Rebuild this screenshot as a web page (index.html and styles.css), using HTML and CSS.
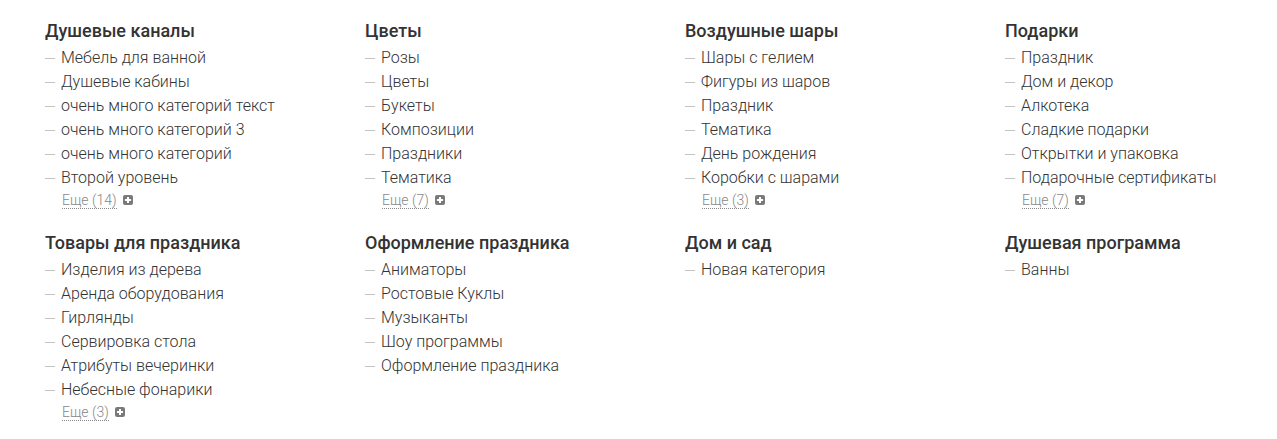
FILE: index.html
```html
<!DOCTYPE html>
<html lang="ru">
<head>
<meta charset="utf-8">
<link rel="stylesheet" href="styles.css">
</head>
<body>
<div class="catalog">
  <div class="section">
    <div class="title">Душевые каналы</div>
    <ul class="list">
      <li>Мебель для ванной</li>
      <li>Душевые кабины</li>
      <li>очень много категорий текст</li>
      <li>очень много категорий 3</li>
      <li>очень много категорий</li>
      <li>Второй уровень</li>
    </ul>
    <div class="more"><span class="more-link">Еще (14)</span><span class="plus"></span></div>
  </div>
  <div class="section">
    <div class="title">Цветы</div>
    <ul class="list">
      <li>Розы</li>
      <li>Цветы</li>
      <li>Букеты</li>
      <li>Композиции</li>
      <li>Праздники</li>
      <li>Тематика</li>
    </ul>
    <div class="more"><span class="more-link">Еще (7)</span><span class="plus"></span></div>
  </div>
  <div class="section">
    <div class="title">Воздушные шары</div>
    <ul class="list">
      <li>Шары с гелием</li>
      <li>Фигуры из шаров</li>
      <li>Праздник</li>
      <li>Тематика</li>
      <li>День рождения</li>
      <li>Коробки с шарами</li>
    </ul>
    <div class="more"><span class="more-link">Еще (3)</span><span class="plus"></span></div>
  </div>
  <div class="section">
    <div class="title">Подарки</div>
    <ul class="list">
      <li>Праздник</li>
      <li>Дом и декор</li>
      <li>Алкотека</li>
      <li>Сладкие подарки</li>
      <li>Открытки и упаковка</li>
      <li>Подарочные сертификаты</li>
    </ul>
    <div class="more"><span class="more-link">Еще (7)</span><span class="plus"></span></div>
  </div>
  <div class="section">
    <div class="title">Товары для праздника</div>
    <ul class="list">
      <li>Изделия из дерева</li>
      <li>Аренда оборудования</li>
      <li>Гирлянды</li>
      <li>Сервировка стола</li>
      <li>Атрибуты вечеринки</li>
      <li>Небесные фонарики</li>
    </ul>
    <div class="more"><span class="more-link">Еще (3)</span><span class="plus"></span></div>
  </div>
  <div class="section">
    <div class="title">Оформление праздника</div>
    <ul class="list">
      <li>Аниматоры</li>
      <li>Ростовые Куклы</li>
      <li>Музыканты</li>
      <li>Шоу программы</li>
      <li>Оформление праздника</li>
    </ul>
  </div>
  <div class="section">
    <div class="title">Дом и сад</div>
    <ul class="list">
      <li>Новая категория</li>
    </ul>
  </div>
  <div class="section">
    <div class="title">Душевая программа</div>
    <ul class="list">
      <li>Ванны</li>
    </ul>
  </div>
</div>
</body>
</html>
```

FILE: styles.css
```css
html, body {
  margin: 0;
  padding: 0;
  background: #fff;
}
body {
  font-family: Roboto, "Liberation Sans", sans-serif;
  color: #333;
}
.catalog {
  display: grid;
  grid-template-columns: repeat(4, 320px);
  row-gap: 21px;
  padding: 19px 0 0 45px;
  align-items: start;
}
.title {
  font-size: 18px;
  font-weight: 500;
  line-height: 24px;
  color: #333;
  margin-bottom: 3px;
}
.list {
  list-style: none;
  margin: 0;
  padding: 0;
}
.list li {
  display: flex;
  align-items: center;
  font-size: 16px;
  font-weight: 300;
  line-height: 24px;
  color: #333;
}
.list li::before {
  content: "";
  width: 10px;
  height: 1px;
  background: #c4c4c4;
  margin-right: 6px;
  flex: none;
}
.more {
  display: flex;
  align-items: center;
  height: 20px;
  padding-left: 17px;
  font-size: 14px;
  font-weight: 300;
}
.more-link {
  color: #888;
  line-height: 16px;
  border-bottom: 1px dotted #888;
}
.plus {
  position: relative;
  width: 10px;
  height: 10px;
  margin-left: 6px;
  background: #7a7a7a;
  border-radius: 2px;
}
.plus::before,
.plus::after {
  content: "";
  position: absolute;
  background: #fff;
}
.plus::before {
  left: 2px;
  top: 4px;
  width: 6px;
  height: 2px;
}
.plus::after {
  left: 4px;
  top: 2px;
  width: 2px;
  height: 6px;
}
```
